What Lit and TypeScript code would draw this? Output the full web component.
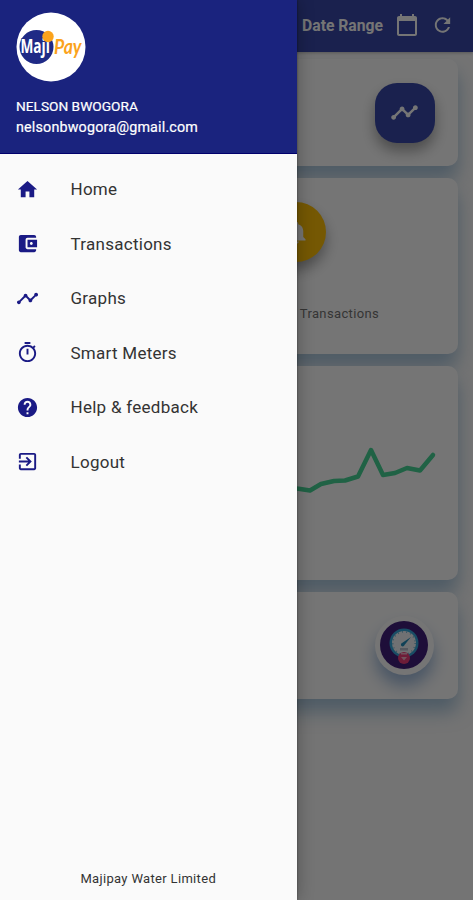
import { LitElement, html, css, svg } from "lit";
import { customElement } from "lit/decorators.js";

const icons: Record<string, string> = {
  home: "M10 20v-6h4v6h5v-8h3L12 3 2 12h3v8z",
  wallet:
    "M21 18v1c0 1.1-.9 2-2 2H5c-1.11 0-2-.9-2-2V5c0-1.1.89-2 2-2h14c1.1 0 2 .9 2 2v1h-9c-1.11 0-2 .9-2 2v8c0 1.1.89 2 2 2h9zm-9-2h10V8H12v8zm4-2.500c-.83 0-1.500-.67-1.500-1.500s.67-1.500 1.500-1.500 1.500.67 1.500 1.500-.67 1.500-1.500 1.500z",
  timeline:
    "M23 8c0 1.100-.9 2-2 2-.18 0-.35-.02-.51-.07l-3.560 3.550c.05.16.07.34.07.52 0 1.100-.9 2-2 2s-2-.9-2-2c0-.18.02-.36.07-.52l-2.550-2.550c-.16.05-.34.07-.52.07s-.36-.02-.52-.07l-4.550 4.560c.05.16.07.33.07.51 0 1.100-.9 2-2 2s-2-.9-2-2 .9-2 2-2c.18 0 .35.02.51.07l4.560-4.550C8.020 9.360 8 9.180 8 9c0-1.100.9-2 2-2s2 .9 2 2c0 .18-.02.36-.07.52l2.550 2.550c.16-.05.34-.07.52-.07s.36.02.52.07l3.550-3.560C19.020 8.350 19 8.180 19 8c0-1.100.9-2 2-2s2 .9 2 2z",
  timer:
    "M15 1H9v2h6V1zm-4 13h2V8h-2v6zm8.030-6.610l1.420-1.420c-.43-.51-.9-.99-1.410-1.410l-1.420 1.420C16.070 4.740 14.120 4 12 4c-4.970 0-9 4.030-9 9s4.020 9 9 9 9-4.030 9-9c0-2.120-.74-4.070-1.970-5.610zM12 20c-3.870 0-7-3.130-7-7s3.130-7 7-7 7 3.130 7 7-3.130 7-7 7z",
  help: "M12 2C6.480 2 2 6.480 2 12s4.480 10 10 10 10-4.480 10-10S17.520 2 12 2zm1 17h-2v-2h2v2zm2.070-7.750l-.9.92C13.450 12.900 13 13.500 13 15h-2v-.5c0-1.100.45-2.100 1.170-2.830l1.240-1.260c.37-.36.59-.86.59-1.410 0-1.100-.9-2-2-2s-2 .9-2 2H8c0-2.210 1.790-4 4-4s4 1.790 4 4c0 .88-.36 1.680-.93 2.250z",
  logout:
    "M10.090 15.590L11.500 17l5-5-5-5-1.410 1.410L12.670 11H3v2h9.670l-2.580 2.590zM19 3H5c-1.110 0-2 .9-2 2v4h2V5h14v14H5v-4H3v4c0 1.100.89 2 2 2h14c1.100 0 2-.9 2-2V5c0-1.100-.9-2-2-2z",
  calendar:
    "M20 3h-1V1h-2v2H7V1H5v2H4c-1.100 0-2 .9-2 2v16c0 1.100.9 2 2 2h16c1.100 0 2-.9 2-2V5c0-1.100-.9-2-2-2zm0 18H4V8h16v13z",
  refresh:
    "M17.650 6.350C16.200 4.900 14.210 4 12 4c-4.420 0-7.990 3.580-7.990 8s3.570 8 7.990 8c3.730 0 6.840-2.550 7.730-6h-2.080c-.82 2.330-3.040 4-5.650 4-3.310 0-6-2.690-6-6s2.690-6 6-6c1.660 0 3.140.69 4.220 1.780L13 11h7V4l-2.350 2.350z",
  bell: "M12 22c1.100 0 2-.9 2-2h-4c0 1.100.89 2 2 2zm6-6v-5c0-3.070-1.640-5.640-4.500-6.320V4c0-.83-.67-1.500-1.500-1.500s-1.500.67-1.500 1.500v.68C7.630 5.360 6 7.920 6 11v5l-2 2v1h16v-1l-2-2z",
};

const icon = (name: string) =>
  html`<svg class="icon" viewBox="0 0 24 24" fill="currentColor" aria-hidden="true">
    ${svg`<path d=${icons[name]}></path>`}
  </svg>`;

@customElement("dash-board")
class DashBoard extends LitElement {
  static styles = css`
    :host {
      display: flex;
      flex-direction: column;
      height: 100%;
      background: #fcfcfc;
      font-family: Roboto, sans-serif;
    }
    .icon {
      display: block;
      width: 24px;
      height: 24px;
    }
    .bar {
      flex: none;
      height: 52px;
      box-sizing: border-box;
      padding: 0 19px 2px 0;
      display: flex;
      align-items: center;
      justify-content: flex-end;
      background: #3949ab;
      color: #fff;
      box-shadow: 0 1px 3px rgba(0, 0, 0, 0.25);
      z-index: 1;
    }
    .range {
      font-size: 15.700px;
      font-weight: 700;
      margin-right: 12px;
    }
    .bar .icon + .icon {
      margin-left: 12px;
      width: 23px;
    }
    .cards {
      display: grid;
      grid-template-rows: 107px 176px 214px 107px;
      gap: 12px;
      padding: 7px 15px 0;
    }
    .card {
      background: #fff;
      border-radius: 10px;
      box-shadow: 0 13px 18px rgba(90, 145, 190, 0.5);
      display: flex;
      align-items: center;
      justify-content: flex-end;
      box-sizing: border-box;
    }
    .tile {
      width: 60px;
      height: 60px;
      margin-right: 23.500px;
      border-radius: 22px;
      background: #3949ab;
      color: #fff;
      display: grid;
      place-items: center;
      box-shadow: 0 8px 14px rgba(0, 0, 0, 0.35);
    }
    .tile .icon {
      width: 29px;
      height: 29px;
    }
    .alerts {
      flex-direction: column;
      justify-content: flex-start;
      align-items: flex-end;
      padding-top: 24px;
      gap: 43.500px;
    }
    .round {
      width: 60px;
      height: 60px;
      border-radius: 50%;
      background: #ffc107;
      color: #fff;
      display: grid;
      place-items: center;
      margin-right: 132px;
      box-shadow: 0 8px 14px rgba(0, 0, 0, 0.35);
    }
    .round .icon {
      width: 27px;
      height: 27px;
    }
    .caption {
      font-size: 13px;
      line-height: 16px;
      letter-spacing: 0.35px;
      color: #757575;
      margin-right: 79px;
    }
    .chart {
      width: 100%;
      height: 100%;
    }
    .meter {
      width: 59px;
      height: 59px;
      margin: 0 24.500px 1px 0;
      border-radius: 50%;
      background: #fff;
      display: grid;
      place-items: center;
      box-shadow: 0 11px 16px rgba(80, 130, 190, 0.55);
    }
    .meter svg {
      width: 48px;
      height: 48px;
      margin-bottom: 1px;
    }
  `;

  render() {
    return html`
      <div class="bar">
        <span class="range">Date Range</span>${icon("calendar")}${icon("refresh")}
      </div>
      <div class="cards">
        <div class="card"><div class="tile">${icon("timeline")}</div></div>
        <div class="card alerts">
          <div class="round">${icon("bell")}</div>
          <div class="caption">Transactions</div>
        </div>
        <div class="card">
          <svg class="chart" viewBox="0 0 443 214" fill="none">
            <path
              d="M245 118L270 120L282 122.500L295 124.500L306 118L319 115L330 114.500L343 110.500L356 84L368 109L380 107L392 102L405 104.500L418 89"
              stroke="#46d596" stroke-width="4.500" stroke-linejoin="round" stroke-linecap="round"
            ></path>
          </svg>
        </div>
        <div class="card">
          <div class="meter">
            <svg viewBox="0 0 48 48">
              <circle cx="24" cy="24" r="24" fill="#431f7c"></circle>
              <circle cx="24" cy="22" r="14.500" fill="#36a9dc"></circle>
              <circle cx="24" cy="22" r="12" fill="#f4f6fa"></circle>
              <circle cx="24" cy="22" r="11.200" fill="none" stroke="#72b9d7" stroke-width="1.500" stroke-dasharray="1 3.200"></circle>
              <path d="M31 16l-9 6a1.800 1.800 0 1 0 2.500 2z" fill="#278fbd"></path>
              <path d="M20 27h8v2.500h-8z" fill="#b9bfd0"></path>
              <circle cx="24" cy="37" r="6" fill="#ef407b"></circle>
              <path d="M21 32h6v1.500h-6zM21 36h6l-3 3.500z" fill="#f7b2c8"></path>
            </svg>
          </div>
        </div>
      </div>
    `;
  }
}

@customElement("nav-drawer")
class NavDrawer extends LitElement {
  static styles = css`
    :host {
      display: flex;
      flex-direction: column;
      background: #fafafa;
      font-family: Roboto, sans-serif;
      box-shadow: 0 0 16px rgba(0, 0, 0, 0.3), 0 0 2px rgba(0, 0, 0, 0.4);
    }
    .head {
      height: 154px;
      flex: none;
      box-sizing: border-box;
      padding: 12px 16px 0 16px;
      background: #1a237e;
      border-bottom: 1px solid #00006c;
      color: #fff;
    }
    .logo {
      display: block;
      width: 70px;
      height: 70px;
      margin-left: -0.500px;
    }
    .name,
    .mail {
      line-height: 21px;
      white-space: nowrap;
    }
    .name {
      margin-top: 14px;
      font-size: 13.700px;
      -webkit-text-stroke: 0.2px #fff;
    }
    .mail {
      font-size: 14.300px;
      letter-spacing: 0.18px;
      -webkit-text-stroke: 0.2px #fff;
    }
    .list {
      flex: 1;
      padding-top: 8px;
    }
    .item {
      height: 54.500px;
      display: flex;
      align-items: center;
      gap: 31px;
      padding-left: 16px;
      color: #333;
      font-size: 17px;
      letter-spacing: 0.27px;
    }
    .icon {
      width: 23px;
      height: 23px;
      margin-right: 0.500px;
      color: #1a1a85;
      flex: none;
    }
    .foot {
      height: 43px;
      line-height: 43px;
      text-align: center;
      font-size: 13px;
      letter-spacing: 0.33px;
      color: #333;
    }
  `;

  private items = [
    ["home", "Home"],
    ["wallet", "Transactions"],
    ["timeline", "Graphs"],
    ["timer", "Smart Meters"],
    ["help", "Help & feedback"],
    ["logout", "Logout"],
  ];

  render() {
    return html`
      <div class="head">
        <svg class="logo" viewBox="0 0 70 70">
          <circle cx="35" cy="35" r="34.500" fill="#fff"></circle>
          <ellipse cx="20.500" cy="35" rx="17" ry="17" fill="#1f2a86"></ellipse>
          <text transform="translate(4.500 41) scale(0.7 1)" font-family="Open Sans, sans-serif" font-size="19.500" font-weight="700"
            fill="#fff" stroke="#1f2a86" stroke-width="1.600" paint-order="stroke">Maji</text>
          <circle cx="32" cy="24.500" r="5.700" fill="#fba31c"></circle>
          <text transform="translate(38 42) scale(0.84 1)" font-family="Lato, sans-serif" font-size="21" font-weight="700" font-style="italic"
            fill="#fba31c">Pay</text>
        </svg>
        <div class="name">NELSON BWOGORA</div>
        <div class="mail">nelsonbwogora@gmail.com</div>
      </div>
      <div class="list">
        ${this.items.map(([i, label]) => html`<div class="item">${icon(i)}<span>${label}</span></div>`)}
      </div>
      <div class="foot">Majipay Water Limited</div>
    `;
  }
}

@customElement("app-root")
class AppRoot extends LitElement {
  static styles = css`
    :host {
      display: block;
      position: relative;
      height: 100vh;
      overflow: hidden;
    }
    .scrim {
      position: absolute;
      inset: 0;
      z-index: 2;
      background: rgba(0, 0, 0, 0.54);
    }
    .drawer {
      position: absolute;
      inset: 0 auto 0 0;
      width: 296.500px;
      z-index: 3;
    }
  `;

  render() {
    return html`
      <dash-board></dash-board>
      <div class="scrim"></div>
      <nav-drawer class="drawer"></nav-drawer>
    `;
  }
}
